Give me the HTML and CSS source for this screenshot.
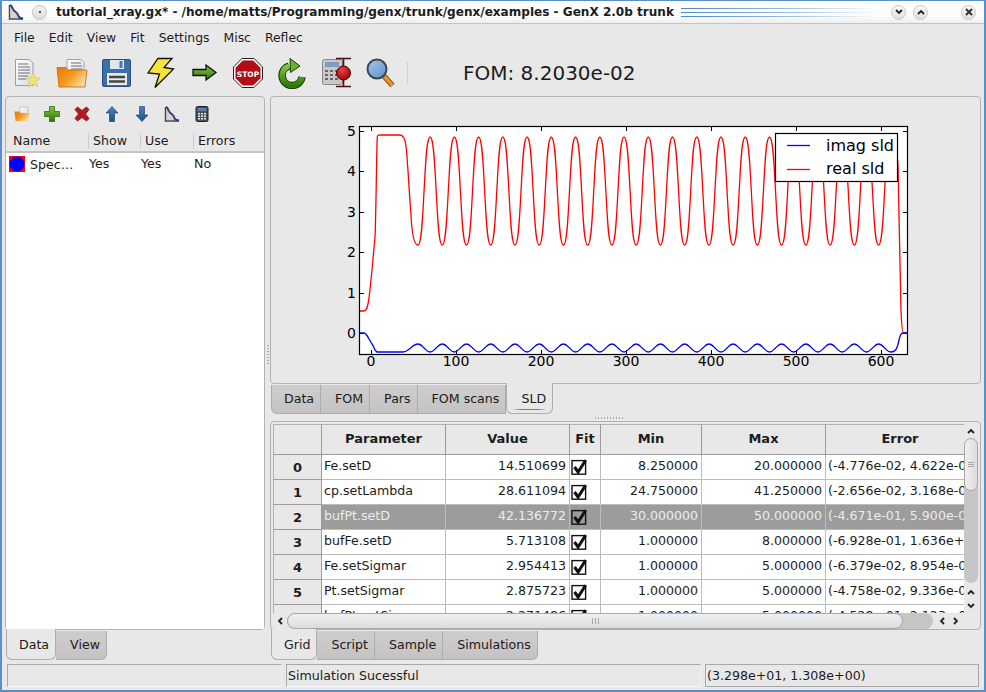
FILE: index.html
```html
<!DOCTYPE html>
<html lang="en">
<head>
    <meta charset="UTF-8">
    <title>GenX 2.0b trunk</title>
    <link rel="stylesheet" href="styles.css">
</head>
<body>
    <!-- Shared gradients and icons -->
    <svg class="svg-defs" xmlns="http://www.w3.org/2000/svg">
        <defs>
            <linearGradient id="g-orange" x1="0" y1="0" x2="1" y2="0.6">
                <stop offset="0" stop-color="#e87a08"/><stop offset="0.55" stop-color="#f59a20"/><stop offset="1" stop-color="#fbd9a0"/>
            </linearGradient>
            <linearGradient id="g-green" x1="0" y1="0" x2="0" y2="1">
                <stop offset="0" stop-color="#86c440"/><stop offset="1" stop-color="#2e7a08"/>
            </linearGradient>
            <linearGradient id="g-blue" x1="0" y1="0" x2="0" y2="1">
                <stop offset="0" stop-color="#4f82bb"/><stop offset="1" stop-color="#16508f"/>
            </linearGradient>
            <linearGradient id="g-lens" x1="0" y1="0" x2="1" y2="1">
                <stop offset="0" stop-color="#a8c8e8"/><stop offset="1" stop-color="#5a8fc8"/>
            </linearGradient>
            <radialGradient id="g-ball" cx="0.4" cy="0.3" r="0.8">
                <stop offset="0" stop-color="#f04040"/><stop offset="1" stop-color="#8a0000"/>
            </radialGradient>
            <linearGradient id="g-paper" x1="0" y1="0" x2="1" y2="1">
                <stop offset="0" stop-color="#ffffff"/><stop offset="1" stop-color="#d8dade"/>
            </linearGradient>
        </defs>
        <symbol id="i-reflect" viewBox="0 0 16 16">
            <path d="M2.5 3V14H13z" fill="#d4d4d4"/>
            <path d="M1.5 1v14H15" fill="none" stroke="#4a4a4a" stroke-width="1.5"/>
            <path d="M2 1c2 .5 2 3 3.500 5s3.500 2 4.500 5 2 3 5 3.500" fill="none" stroke="#1d3f90" stroke-width="2"/>
            <circle cx="5" cy="5" r="1.100" fill="#e02020"/><circle cx="9.500" cy="10" r="1.100" fill="#e02020"/>
        </symbol>
        <symbol id="i-chevron" viewBox="0 0 8 6">
            <path d="M1 5l3-3 3 3" fill="none" stroke="#222" stroke-width="1.8"/>
        </symbol>
        <symbol id="i-check" viewBox="0 0 16 16">
            <rect x="1" y="1.6" width="13.6" height="13.6" fill="none" stroke="#111" stroke-width="1.4"/>
            <path d="M3.500 8l3.600 5L14.600 1.200" fill="none" stroke="#111" stroke-width="3"/>
        </symbol>
        <symbol id="i-calc" viewBox="0 0 16 16">
            <rect x="2" y="0.5" width="12" height="15" rx="1.5" fill="#4a4f55" stroke="#222"/>
            <rect x="3.5" y="2" width="9" height="3" fill="#5b7fa8"/>
            <path d="M4 7h2v1.500H4zM7 7h2v1.500H7zM10 7h2v1.500h-2zM4 9.500h2V11H4zM7 9.500h2V11H7zM10 9.500h2V11h-2zM4 12h2v1.500H4zM7 12h2v1.500H7zM10 12h2v1.500h-2z" fill="#e8e8e8"/>
        </symbol>
    </svg>

    <div class="window">
        <!-- Title bar -->
        <div class="titlebar">
            <svg class="title-icon"><use href="#i-reflect"/></svg>
            <span class="title-pin"><i></i></span>
            <span class="title-text">tutorial_xray.gx* - /home/matts/Programming/genx/trunk/genx/examples - GenX 2.0b trunk</span>
            <div class="title-lines"><i></i><i></i><i></i></div>
            <span class="win-btn"><svg class="flip"><use href="#i-chevron"/></svg></span>
            <span class="win-btn"><svg><use href="#i-chevron"/></svg></span>
            <span class="win-btn win-close">
                <svg viewBox="0 0 10 10"><path d="M2 2l6 6M8 2l-6 6" stroke="#333" stroke-width="2"/></svg>
            </span>
        </div>

        <!-- Menu -->
        <div class="menubar">
            <span>File</span><span>Edit</span><span>View</span><span>Fit</span><span>Settings</span><span>Misc</span><span>Reflec</span>
        </div>

        <!-- Main toolbar -->
        <div class="toolbar">
            <span class="tool">
                <svg viewBox="0 0 32 32">
                    <path d="M3.5 2.500h14l3.500 3.500V28.500H3.500z" fill="url(#g-paper)" stroke="#9a9ea4"/>
                    <path d="M6 7h10M6 10h12M6 13h12M6 16h12M6 19h10M6 22h8" stroke="#6a7078" stroke-width="1.2"/>
                    <path d="M21 15.500l2.200 5 5.300.6-4 3.600 1.200 5.300-4.700-2.800-4.700 2.800 1.200-5.300-4-3.600 5.300-.6z" fill="#f4e070" stroke="#c8c8a0" stroke-width="0.8"/>
                </svg>
            </span>
            <span class="tool">
                <svg viewBox="0 0 32 32">
                    <path d="M11 2.500h14l3 3V22H11z" fill="url(#g-paper)" stroke="#a0a4aa"/>
                    <path d="M15 6h10M15 9h11M15 12h11" stroke="#6a7078" stroke-width="1.2"/>
                    <path d="M1 10.500h9l2 2.500h19L29 30H3z" fill="url(#g-orange)" stroke="#c06a08" stroke-width="0.8"/>
                </svg>
            </span>
            <span class="tool">
                <svg viewBox="0 0 32 32">
                    <rect x="2.5" y="2.5" width="28" height="27" rx="1.5" fill="#3c6fa8" stroke="#274f80"/>
                    <rect x="10" y="3" width="14" height="9" fill="#dfe6ee"/>
                    <rect x="19.5" y="4" width="3" height="7" fill="#4a76a8"/>
                    <rect x="7" y="16" width="20" height="12" fill="#e8e8e8"/>
                    <path d="M9 20h16M9 24.500h16" stroke="#444" stroke-width="2.6"/>
                </svg>
            </span>
            <span class="tool">
                <svg viewBox="0 0 32 32">
                    <path d="M14 1.500h14l-8 9 9.500 1.500L11 30.500l4.500-13.500-11.500-1z" fill="#f6e53c" stroke="#111" stroke-width="1.3"/>
                </svg>
            </span>
            <span class="tool">
                <svg viewBox="0 0 32 32">
                    <path d="M5 12.500h13V8l10 7.500L18 23v-4.500H5z" fill="url(#g-green)" stroke="#111" stroke-width="1.3"/>
                </svg>
            </span>
            <span class="tool">
                <svg viewBox="0 0 32 32">
                    <path d="M10 1.500h12L30.500 10v12L22 30.500H10L1.500 22V10z" fill="#fff" stroke="#222"/>
                    <path d="M10.800 3.500h10.400l7.300 7.300v10.400l-7.300 7.300H10.800l-7.300-7.300V10.800z" fill="#b40d18"/>
                    <text class="stop-text" x="16" y="19.5" text-anchor="middle">STOP</text>
                </svg>
            </span>
            <span class="tool">
                <svg viewBox="0 0 32 32">
                    <path d="M26 20A10 10 0 1 1 13 9" fill="none" stroke="#143c00" stroke-width="7.5"/>
                    <path d="M26 20A10 10 0 1 1 13 9" fill="none" stroke="url(#g-green)" stroke-width="5.5"/>
                    <path d="M14 1.500l10 7.500-9.500 6.500z" fill="#6cb030" stroke="#143c00"/>
                </svg>
            </span>
            <span class="tool">
                <svg viewBox="0 0 32 32">
                    <rect x="2.5" y="2.5" width="20" height="25" rx="2" fill="#c8c8c8" stroke="#888"/>
                    <rect x="5" y="5" width="14" height="5" fill="#7e9cc4"/>
                    <path d="M5 13h3v2H5zM10 13h3v2h-3zM15 13h3v2h-3zM5 17h3v2H5zM10 17h3v2h-3zM15 17h3v2h-3zM5 21h3v2H5zM10 21h3v2h-3zM15 21h3v2h-3z" fill="#666"/>
                    <path d="M16 1.500h15M23.500 1.500v28M16 29.500h15" stroke="#4a1010" stroke-width="1.6" fill="none"/>
                    <circle cx="23.5" cy="16" r="7" fill="url(#g-ball)" stroke="#500"/>
                </svg>
            </span>
            <span class="tool">
                <svg viewBox="0 0 32 32">
                    <path d="M20 19l8.500 9.500" stroke="#7a4a10" stroke-width="5.5"/>
                    <path d="M20.500 19.500l8 9" stroke="#f09030" stroke-width="3.5"/>
                    <circle cx="13" cy="12" r="9.5" fill="url(#g-lens)" stroke="#3c4650" stroke-width="2"/>
                </svg>
            </span>
            <span class="tool-sep"></span>
            <span class="fom">FOM: 8.2030e-02</span>
        </div>

        <div class="main">
            <!-- Left: data list -->
            <div class="col-left">
                <div class="panel list-panel">
                    <div class="mini-toolbar">
                        <span class="mini">
                            <svg viewBox="0 0 16 16">
                                <path d="M6 1h8v9H6z" fill="url(#g-paper)" stroke="#aaa" stroke-width="0.6"/>
                                <path d="M.5 5.500h5l1 1.500h9L14 15H1.500z" fill="url(#g-orange)"/>
                            </svg>
                        </span>
                        <span class="mini">
                            <svg viewBox="0 0 16 16">
                                <path d="M5.500.5h5v5h5v5h-5v5h-5v-5h-5v-5h5z" fill="url(#g-green)" stroke="#2c6a10" stroke-width="0.8"/>
                            </svg>
                        </span>
                        <span class="mini">
                            <svg viewBox="0 0 16 16">
                                <path d="M3.500 1L8 4.500 12.500 1 15 3.500 11.500 8l3.500 4.500-2.500 2.500L8 11.500 3.500 15 1 12.500 4.500 8 1 3.500z" fill="#b41a20" stroke="#7a1015" stroke-width="0.8"/>
                            </svg>
                        </span>
                        <span class="mini">
                            <svg viewBox="0 0 16 16">
                                <path d="M8 .5L14 7h-3.500v8.500h-5V7H2z" fill="url(#g-blue)" stroke="#123a6a" stroke-width="0.6"/>
                            </svg>
                        </span>
                        <span class="mini">
                            <svg viewBox="0 0 16 16">
                                <path d="M8 15.500L2 9h3.500V.5h5V9H14z" fill="url(#g-blue)" stroke="#123a6a" stroke-width="0.6"/>
                            </svg>
                        </span>
                        <span class="mini"><svg><use href="#i-reflect"/></svg></span>
                        <span class="mini"><svg><use href="#i-calc"/></svg></span>
                    </div>
                    <div class="list-head">
                        <span class="lc-name">Name</span><span class="lc-show">Show</span><span class="lc-use">Use</span><span class="lc-err">Errors</span>
                    </div>
                    <div class="list-body">
                        <div class="list-row">
                            <span class="lc-name">
                                <svg class="swatch" viewBox="0 0 16 16"><rect width="16" height="16" fill="#f00"/><circle cx="8" cy="8" r="7.5" fill="#00f"/></svg>Spec…
                            </span>
                            <span class="lc-show">Yes</span><span class="lc-use">Yes</span><span class="lc-err">No</span>
                        </div>
                    </div>
                </div>
                <div class="tabs tabs-bottom">
                    <span class="tab active">Data</span><span class="tab">View</span>
                </div>
            </div>

            <div class="sash-v"><i></i></div>

            <!-- Right: plot and grid -->
            <div class="col-right">
                <div class="panel plot-panel">
                    <svg class="plot" viewBox="271 97 709 286" xmlns="http://www.w3.org/2000/svg">
                        <rect x="359.5" y="126.5" width="548" height="228" fill="#fff"/>
                        <g class="ticks">
                            <path d="M371.500 354v-4M456.500 354v-4M541.500 354v-4M626.500 354v-4M711.500 354v-4M796.500 354v-4M881.500 354v-4"/>
                            <path d="M371.500 127v4M456.500 127v4M541.500 127v4M626.500 127v4M711.500 127v4M796.500 127v4M881.500 127v4"/>
                            <path d="M360 333.500h4M360 293.500h4M360 252.500h4M360 212.500h4M360 171.500h4M360 131.500h4"/>
                            <path d="M907 333.500h-4M907 293.500h-4M907 252.500h-4M907 212.500h-4M907 171.500h-4M907 131.500h-4"/>
                        </g>
                        <path class="line-red" d="M359.500 311H364C367 311 368 305 369 298C370 290 371 280 372 270L375 237C376 220 376.500 150 377.300 137C377.600 135 378 135 380 135H400C403 135 405 138 406 146C407.500 158 409 190 411 215C412 236 414 245 418 245
                            c3.6,0 4.6,-28 6.06,-54 c1.46,-26 2.46,-54 6.06,-54 c3.6,0 4.6,28 6.06,54 c1.46,26 2.46,54 6.06,54
                            c3.6,0 4.6,-28 6.06,-54 c1.46,-26 2.46,-54 6.06,-54 c3.6,0 4.6,28 6.06,54 c1.46,26 2.46,54 6.06,54
                            c3.6,0 4.6,-28 6.06,-54 c1.46,-26 2.46,-54 6.06,-54 c3.6,0 4.6,28 6.06,54 c1.46,26 2.46,54 6.06,54
                            c3.6,0 4.6,-28 6.06,-54 c1.46,-26 2.46,-54 6.06,-54 c3.6,0 4.6,28 6.06,54 c1.46,26 2.46,54 6.06,54
                            c3.6,0 4.6,-28 6.06,-54 c1.46,-26 2.46,-54 6.06,-54 c3.6,0 4.6,28 6.06,54 c1.46,26 2.46,54 6.06,54
                            c3.6,0 4.6,-28 6.06,-54 c1.46,-26 2.46,-54 6.06,-54 c3.6,0 4.6,28 6.06,54 c1.46,26 2.46,54 6.06,54
                            c3.6,0 4.6,-28 6.06,-54 c1.46,-26 2.46,-54 6.06,-54 c3.6,0 4.6,28 6.06,54 c1.46,26 2.46,54 6.06,54
                            c3.6,0 4.6,-28 6.06,-54 c1.46,-26 2.46,-54 6.06,-54 c3.6,0 4.6,28 6.06,54 c1.46,26 2.46,54 6.06,54
                            c3.6,0 4.6,-28 6.06,-54 c1.46,-26 2.46,-54 6.06,-54 c3.6,0 4.6,28 6.06,54 c1.46,26 2.46,54 6.06,54
                            c3.6,0 4.6,-28 6.06,-54 c1.46,-26 2.46,-54 6.06,-54 c3.6,0 4.6,28 6.06,54 c1.46,26 2.46,54 6.06,54
                            c3.6,0 4.6,-28 6.06,-54 c1.46,-26 2.46,-54 6.06,-54 c3.6,0 4.6,28 6.06,54 c1.46,26 2.46,54 6.06,54
                            c3.6,0 4.6,-28 6.06,-54 c1.46,-26 2.46,-54 6.06,-54 c3.6,0 4.6,28 6.06,54 c1.46,26 2.46,54 6.06,54
                            c3.6,0 4.6,-28 6.06,-54 c1.46,-26 2.46,-54 6.06,-54 c3.6,0 4.6,28 6.06,54 c1.46,26 2.46,54 6.06,54
                            c3.6,0 4.6,-28 6.06,-54 c1.46,-26 2.46,-54 6.06,-54 c3.6,0 4.6,28 6.06,54 c1.46,26 2.46,54 6.06,54
                            c3.6,0 4.6,-28 6.06,-54 c1.46,-26 2.46,-54 6.06,-54 c3.6,0 4.6,28 6.06,54 c1.46,26 2.46,54 6.06,54
                            c3.6,0 4.6,-28 6.06,-54 c1.46,-26 2.46,-54 6.06,-54 c3.6,0 4.6,28 6.06,54 c1.46,26 2.46,54 6.06,54
                            c3.6,0 4.6,-28 6.06,-54 c1.46,-26 2.46,-54 6.06,-54 c3.6,0 4.6,28 6.06,54 c1.46,26 2.46,54 6.06,54
                            c3.6,0 4.6,-28 6.06,-54 c1.46,-26 2.46,-54 6.06,-54 c3.6,0 4.6,28 6.06,54 c1.46,26 2.46,54 6.06,54
                            c3.6,0 4.6,-28 6.06,-54 c1.46,-26 2.46,-54 6.06,-54 c3.6,0 4.6,28 6.06,54 c1.46,26 2.46,54 6.06,54
                            c3.6,0 4.6,-28 6.06,-54 c1.46,-26 2.46,-54 6.06,-54
                            C893 137 896 140 898 165L899.500 240L901 310Q902 333 903.500 333H907"/>
                        <path class="line-blue" d="M359.500 333H364C366 333 367 335 369 339L372 344C373.500 346 374 348 375 350L377 352H403C405 352 406 351.500 408 350C411 348 414 344 418 344
                            c2.6,0 4.4,2.4 6.06,4 c1.66,1.6 3.46,4 6.06,4 c2.6,0 4.4,-2.4 6.06,-4 c1.66,-1.6 3.46,-4 6.06,-4
                            c2.6,0 4.4,2.4 6.06,4 c1.66,1.6 3.46,4 6.06,4 c2.6,0 4.4,-2.4 6.06,-4 c1.66,-1.6 3.46,-4 6.06,-4
                            c2.6,0 4.4,2.4 6.06,4 c1.66,1.6 3.46,4 6.06,4 c2.6,0 4.4,-2.4 6.06,-4 c1.66,-1.6 3.46,-4 6.06,-4
                            c2.6,0 4.4,2.4 6.06,4 c1.66,1.6 3.46,4 6.06,4 c2.6,0 4.4,-2.4 6.06,-4 c1.66,-1.6 3.46,-4 6.06,-4
                            c2.6,0 4.4,2.4 6.06,4 c1.66,1.6 3.46,4 6.06,4 c2.6,0 4.4,-2.4 6.06,-4 c1.66,-1.6 3.46,-4 6.06,-4
                            c2.6,0 4.4,2.4 6.06,4 c1.66,1.6 3.46,4 6.06,4 c2.6,0 4.4,-2.4 6.06,-4 c1.66,-1.6 3.46,-4 6.06,-4
                            c2.6,0 4.4,2.4 6.06,4 c1.66,1.6 3.46,4 6.06,4 c2.6,0 4.4,-2.4 6.06,-4 c1.66,-1.6 3.46,-4 6.06,-4
                            c2.6,0 4.4,2.4 6.06,4 c1.66,1.6 3.46,4 6.06,4 c2.6,0 4.4,-2.4 6.06,-4 c1.66,-1.6 3.46,-4 6.06,-4
                            c2.6,0 4.4,2.4 6.06,4 c1.66,1.6 3.46,4 6.06,4 c2.6,0 4.4,-2.4 6.06,-4 c1.66,-1.6 3.46,-4 6.06,-4
                            c2.6,0 4.4,2.4 6.06,4 c1.66,1.6 3.46,4 6.06,4 c2.6,0 4.4,-2.4 6.06,-4 c1.66,-1.6 3.46,-4 6.06,-4
                            c2.6,0 4.4,2.4 6.06,4 c1.66,1.6 3.46,4 6.06,4 c2.6,0 4.4,-2.4 6.06,-4 c1.66,-1.6 3.46,-4 6.06,-4
                            c2.6,0 4.4,2.4 6.06,4 c1.66,1.6 3.46,4 6.06,4 c2.6,0 4.4,-2.4 6.06,-4 c1.66,-1.6 3.46,-4 6.06,-4
                            c2.6,0 4.4,2.4 6.06,4 c1.66,1.6 3.46,4 6.06,4 c2.6,0 4.4,-2.4 6.06,-4 c1.66,-1.6 3.46,-4 6.06,-4
                            c2.6,0 4.4,2.4 6.06,4 c1.66,1.6 3.46,4 6.06,4 c2.6,0 4.4,-2.4 6.06,-4 c1.66,-1.6 3.46,-4 6.06,-4
                            c2.6,0 4.4,2.4 6.06,4 c1.66,1.6 3.46,4 6.06,4 c2.6,0 4.4,-2.4 6.06,-4 c1.66,-1.6 3.46,-4 6.06,-4
                            c2.6,0 4.4,2.4 6.06,4 c1.66,1.6 3.46,4 6.06,4 c2.6,0 4.4,-2.4 6.06,-4 c1.66,-1.6 3.46,-4 6.06,-4
                            c2.6,0 4.4,2.4 6.06,4 c1.66,1.6 3.46,4 6.06,4 c2.6,0 4.4,-2.4 6.06,-4 c1.66,-1.6 3.46,-4 6.06,-4
                            c2.6,0 4.4,2.4 6.06,4 c1.66,1.6 3.46,4 6.06,4 c2.6,0 4.4,-2.4 6.06,-4 c1.66,-1.6 3.46,-4 6.06,-4
                            c2.6,0 4.4,2.4 6.06,4 c1.66,1.6 3.46,4 6.06,4 c2.6,0 4.4,-2.4 6.06,-4 c1.66,-1.6 3.46,-4 6.06,-4
                            c2.6,0 4.4,2.4 6.06,4 c1.66,1.6 3.46,4 6.06,4
                            C895 352 897 350 899 340C900 335 901 333 903 333H907"/>
                        <rect class="frame" x="359.5" y="126.5" width="548" height="228"/>
                        <g class="tick-labels x-labels">
                            <text x="371" y="366">0</text><text x="456" y="366">100</text><text x="541" y="366">200</text><text x="626" y="366">300</text><text x="711" y="366">400</text><text x="796" y="366">500</text><text x="881" y="366">600</text>
                        </g>
                        <g class="tick-labels y-labels">
                            <text x="356" y="338">0</text><text x="356" y="298">1</text><text x="356" y="257">2</text><text x="356" y="217">3</text><text x="356" y="176">4</text><text x="356" y="136">5</text>
                        </g>
                        <rect class="legend" x="775.5" y="133.5" width="122" height="48"/>
                        <path class="line-blue" d="M787 145.500h23"/>
                        <path class="line-red" d="M787 169.500h23"/>
                        <text class="legend-text" x="826" y="151">imag sld</text>
                        <text class="legend-text" x="826" y="174">real sld</text>
                    </svg>
                </div>
                <div class="tabs tabs-top">
                    <span class="tab">Data</span><span class="tab">FOM</span><span class="tab">Pars</span><span class="tab">FOM scans</span><span class="tab active">SLD</span>
                </div>
                <div class="sash-h"><i></i></div>

                <div class="panel grid-panel">
                    <div class="grid-top">
                        <div class="grid-clip">
                            <table class="grid">
                                <colgroup>
                                    <col class="c-label"><col class="c-wide"><col class="c-wide"><col class="c-fit"><col class="c-min"><col class="c-wide"><col class="c-err">
                                </colgroup>
                                <thead>
                                    <tr><th></th><th>Parameter</th><th>Value</th><th>Fit</th><th>Min</th><th>Max</th><th>Error</th></tr>
                                </thead>
                                <tbody>
                                    <tr><th>0</th><td>Fe.setD</td><td class="num">14.510699</td><td class="chk"><svg><use href="#i-check"/></svg></td><td class="num">8.250000</td><td class="num">20.000000</td><td>(-4.776e-02, 4.622e-02)</td></tr>
                                    <tr><th>1</th><td>cp.setLambda</td><td class="num">28.611094</td><td class="chk"><svg><use href="#i-check"/></svg></td><td class="num">24.750000</td><td class="num">41.250000</td><td>(-2.656e-02, 3.168e-02)</td></tr>
                                    <tr class="selected"><th>2</th><td>bufPt.setD</td><td class="num">42.136772</td><td class="chk"><svg><use href="#i-check"/></svg></td><td class="num">30.000000</td><td class="num">50.000000</td><td>(-4.671e-01, 5.900e-01)</td></tr>
                                    <tr><th>3</th><td>bufFe.setD</td><td class="num">5.713108</td><td class="chk"><svg><use href="#i-check"/></svg></td><td class="num">1.000000</td><td class="num">8.000000</td><td>(-6.928e-01, 1.636e+00)</td></tr>
                                    <tr><th>4</th><td>Fe.setSigmar</td><td class="num">2.954413</td><td class="chk"><svg><use href="#i-check"/></svg></td><td class="num">1.000000</td><td class="num">5.000000</td><td>(-6.379e-02, 8.954e-02)</td></tr>
                                    <tr><th>5</th><td>Pt.setSigmar</td><td class="num">2.875723</td><td class="chk"><svg><use href="#i-check"/></svg></td><td class="num">1.000000</td><td class="num">5.000000</td><td>(-4.758e-02, 9.336e-02)</td></tr>
                                    <tr><th>6</th><td>bufPt.setSigmar</td><td class="num">2.271486</td><td class="chk"><svg><use href="#i-check"/></svg></td><td class="num">1.000000</td><td class="num">5.000000</td><td>(-4.528e-01, 2.123e-01)</td></tr>
                                </tbody>
                            </table>
                        </div>
                        <div class="vscroll">
                            <span class="arrow"><svg><use href="#i-chevron"/></svg></span>
                            <div class="v-trough"><div class="v-thumb"></div></div>
                            <span class="arrow arrow-gap"><svg><use href="#i-chevron"/></svg></span>
                            <span class="arrow"><svg class="flip"><use href="#i-chevron"/></svg></span>
                        </div>
                    </div>
                    <div class="hscroll">
                        <span class="arrow"><svg class="turn-left"><use href="#i-chevron"/></svg></span>
                        <div class="h-trough"><div class="h-thumb"></div></div>
                        <span class="arrow"><svg class="turn-left"><use href="#i-chevron"/></svg></span>
                        <span class="arrow"><svg class="turn-right"><use href="#i-chevron"/></svg></span>
                    </div>
                </div>
                <div class="tabs tabs-bottom">
                    <span class="tab active">Grid</span><span class="tab">Script</span><span class="tab">Sample</span><span class="tab">Simulations</span>
                </div>
            </div>
        </div>

        <!-- Status bar -->
        <div class="statusbar">
            <span class="status st-1"></span>
            <span class="status st-2">Simulation Sucessful</span>
            <span class="status st-3">(3.298e+01, 1.308e+00)</span>
        </div>
    </div>
</body>
</html>
```

FILE: styles.css
```css
:root {
    --bg: #e8e8e8;
    --line: #b2b2b2;
    --cell-line: #bcbcbc;
    --head-line: #9c9c9c;
    --text: #1c1c1c;
    --blue: #5b8fc9;
}

* {
    box-sizing: border-box;
}

body {
    margin: 0;
    background: var(--bg);
    font-family: "DejaVu Sans", sans-serif;
    font-size: 12.6px;
    color: var(--text);
}

.svg-defs {
    display: block;
    width: 0;
    height: 0;
}

.window {
    display: flex;
    flex-direction: column;
    width: 986px;
    height: 692px;
    border: 2px solid var(--blue);
    border-top-width: 1px;
    background: var(--bg);
    overflow: hidden;
}

/* Title bar */
.titlebar {
    display: flex;
    align-items: center;
    flex: 0 0 23px;
    padding-left: 6px;
    background: linear-gradient(#ffffff, #fbfbfb 70%, #eeeeee);
    border-bottom: 1px solid #c4c4c4;
}

.titlebar > * {
    flex-shrink: 0;
}

.title-icon {
    width: 16px;
    height: 16px;
    margin-right: 8px;
}

.title-pin {
    display: flex;
    align-items: center;
    justify-content: center;
    width: 15px;
    height: 15px;
    margin-right: 9px;
    border: 1px solid #c4c4c4;
    border-radius: 50%;
    background: linear-gradient(#f4f4f4, #dcdcdc);
}

.title-pin i {
    width: 2px;
    height: 2px;
    background: #555;
}

.title-text {
    width: 625px;
    font-size: 12.05px;
    font-weight: bold;
    white-space: nowrap;
}

.title-lines {
    display: flex;
    flex-direction: column;
    gap: 3px;
    width: 200px;
    margin-right: 10px;
}

.title-lines i {
    display: block;
    height: 1px;
    background: linear-gradient(90deg, #4d88c6, #9dbfe0 55%, #ffffff);
}

.win-btn {
    display: flex;
    align-items: center;
    justify-content: center;
    width: 15px;
    height: 15px;
    margin-right: 7px;
    border: 1px solid #c8c8c8;
    border-radius: 50%;
    background: linear-gradient(#fafafa, #e0e0e0);
}

.win-btn svg {
    width: 8px;
    height: 6px;
}

.win-close {
    margin-left: 26px;
}

.win-close svg {
    width: 10px;
    height: 10px;
}

.flip {
    transform: rotate(180deg);
}

.turn-left {
    transform: rotate(-90deg);
}

.turn-right {
    transform: rotate(90deg);
}

/* Menu */
.menubar {
    display: flex;
    align-items: center;
    gap: 14px;
    flex: 0 0 26px;
    padding-left: 12px;
    font-size: 12.4px;
}

/* Toolbar */
.toolbar {
    display: flex;
    align-items: center;
    flex: 0 0 46px;
    padding-left: 4px;
}

.tool {
    display: flex;
    justify-content: center;
    width: 44px;
}

.tool svg {
    width: 32px;
    height: 32px;
}

.stop-text {
    font-family: "DejaVu Sans", sans-serif;
    font-size: 7.5px;
    font-weight: bold;
    fill: #fff;
}

.tool-sep {
    width: 1px;
    height: 22px;
    margin-left: 5px;
    background: #d0d0d0;
}

.fom {
    margin-left: 55px;
    font-size: 20px;
}

/* Main layout */
.main {
    display: flex;
    flex: 1;
    min-height: 0;
    padding: 0 3px;
}

.col-left {
    display: flex;
    flex-direction: column;
    width: 260px;
}

.col-right {
    display: flex;
    flex-direction: column;
    width: 711px;
}

.panel {
    border: 1px solid var(--line);
    border-radius: 4px;
}

.sash-v {
    display: flex;
    align-items: center;
    justify-content: center;
    width: 5px;
    padding-bottom: 50px;
}

.sash-v i {
    width: 2px;
    height: 20px;
    background: repeating-linear-gradient(#a8a8a8 0 1px, transparent 1px 3px);
}

.sash-h {
    display: flex;
    align-items: center;
    justify-content: center;
    flex: 0 0 7px;
    padding-right: 34px;
}

.sash-h i {
    width: 28px;
    height: 2px;
    background: repeating-linear-gradient(90deg, #a8a8a8 0 1px, transparent 1px 3px);
}

/* Data list */
.list-panel {
    display: flex;
    flex-direction: column;
    flex: 1;
    min-height: 0;
}

.mini-toolbar {
    display: flex;
    align-items: center;
    flex: 0 0 33px;
    padding-left: 1px;
}

.mini {
    display: flex;
    justify-content: center;
    width: 30px;
}

.mini svg {
    width: 16px;
    height: 16px;
}

.list-head {
    display: flex;
    align-items: center;
    flex: 0 0 23px;
    border-bottom: 2px solid #c4c4c4;
}

.list-head span + span {
    border-left: 1px solid #cccccc;
    line-height: 16px;
}

.lc-name {
    display: flex;
    align-items: center;
    width: 82px;
    padding-left: 7px;
}

.lc-show {
    width: 52px;
    padding-left: 4px;
}

.lc-use {
    width: 53px;
    padding-left: 4px;
}

.lc-err {
    padding-left: 4px;
}

.list-body {
    flex: 1;
    background: #fff;
}

.list-row {
    display: flex;
    align-items: center;
    height: 22px;
}

.list-row span {
    padding-bottom: 1px;
}

.list-row .lc-name {
    padding-left: 3px;
    padding-bottom: 0;
}

.list-row .lc-show,
.list-row .lc-use,
.list-row .lc-err {
    padding-left: 1px;
}

.swatch {
    flex-shrink: 0;
    width: 16px;
    height: 16px;
    margin-right: 5px;
}

/* Notebook tabs */
.tabs {
    display: flex;
    align-items: flex-start;
    padding-left: 1px;
}

.tabs-top {
    flex: 0 0 30px;
}

.tabs-bottom {
    flex: 0 0 34px;
}

.tab {
    height: 29px;
    margin-top: 1px;
    padding: 0 6px 0 14px;
    line-height: 27px;
    background: linear-gradient(#cfcdcd, #c4c2c2);
    border-right: 1px solid #adadad;
    border-bottom: 1px solid #adadad;
    white-space: nowrap;
}

.tab:first-child {
    padding-left: 12px;
    border-left: 1px solid #adadad;
    border-bottom-left-radius: 6px;
}

.tab:last-child {
    border-bottom-right-radius: 6px;
}

.tab.active {
    position: relative;
    height: 31px;
    margin-top: -1px;
    padding-top: 2px;
    background: var(--bg);
    border: 1px solid #adadad;
    border-top: none;
    border-radius: 0 0 6px 6px;
}

.tabs-top .tab.active::after {
    content: "";
    position: absolute;
    left: 5px;
    right: 5px;
    bottom: 3px;
    height: 1px;
    background: linear-gradient(90deg, transparent, #4d88c6 25%, #4d88c6 75%, transparent);
}

/* Plot */
.plot-panel {
    flex: 0 0 288px;
}

.plot {
    display: block;
    width: 709px;
    height: 286px;
}

.ticks path {
    fill: none;
    stroke: #000;
    stroke-width: 1;
}

.frame,
.legend {
    fill: none;
    stroke: #000;
    stroke-width: 1.2;
}

.legend {
    fill: #fff;
}

.line-red,
.line-blue {
    fill: none;
    stroke-width: 1.3;
}

.line-red {
    stroke: #f00;
}

.line-blue {
    stroke: #00f;
}

.tick-labels {
    font-family: "DejaVu Sans", sans-serif;
    font-size: 14px;
    fill: #000;
}

.x-labels {
    text-anchor: middle;
}

.y-labels {
    text-anchor: end;
}

.legend-text {
    font-family: "DejaVu Sans", sans-serif;
    font-size: 16px;
    fill: #000;
}

/* Parameter grid */
.grid-panel {
    display: flex;
    flex-direction: column;
    flex: 1;
    min-height: 0;
    padding: 2px 2px 0;
}

.grid-top {
    display: flex;
    height: 189px;
}

.grid-clip {
    width: 691px;
    overflow: hidden;
}

.grid {
    table-layout: fixed;
    width: 701px;
    border-collapse: separate;
    border-spacing: 0;
}

.c-label {
    width: 49px;
}

.c-wide {
    width: 124px;
}

.c-fit {
    width: 31px;
}

.c-min {
    width: 101px;
}

.c-err {
    width: 148px;
}

.grid th,
.grid td {
    height: 25px;
    padding: 0 3px 4px 2px;
    overflow: hidden;
    white-space: nowrap;
    border-right: 1px solid var(--cell-line);
    border-bottom: 1px solid var(--cell-line);
    background: #fff;
}

.grid th {
    font-size: 13px;
    background: var(--bg);
    border-color: var(--head-line);
    padding: 1px 3px 0;
}

.grid thead th {
    height: 31px;
    padding: 0 3px 3px;
    border-top: 1px solid var(--line);
}

.grid thead th:first-child,
.grid tbody th {
    border-left: 1px solid var(--line);
}

.grid .num {
    text-align: right;
}

.grid .selected td {
    background: #9c9c9c;
    color: #ececec;
}

.grid td.chk {
    padding: 0;
}

.chk svg {
    display: block;
    width: 16px;
    height: 16px;
    margin-left: 1px;
}

.grid tbody td:last-child,
.grid thead th:last-child {
    border-right: none;
}

/* Scrollbars */
.arrow {
    display: flex;
    align-items: center;
    justify-content: center;
    flex: 0 0 14px;
    height: 14px;
}

.arrow svg {
    width: 8px;
    height: 6px;
}

.vscroll {
    display: flex;
    flex-direction: column;
    width: 14px;
}

.v-trough {
    flex: 1;
    background: #c6c6c6;
    border-radius: 7px;
}

.v-thumb {
    display: flex;
    align-items: center;
    justify-content: center;
    height: 53px;
    background: linear-gradient(90deg, #f0f0f0, #dcdcdc);
    border: 1px solid #a8a8a8;
    border-radius: 7px;
}

.v-thumb::before {
    content: "";
    width: 6px;
    height: 5px;
    background: repeating-linear-gradient(#a8a8a8 0 1px, transparent 1px 2px);
}

.arrow-gap {
    margin-top: 2px;
}

.hscroll {
    display: flex;
    align-items: center;
    height: 16px;
}

.h-trough {
    display: flex;
    width: 646px;
    height: 16px;
    margin-right: 2px;
    background: #c6c6c6;
    border-radius: 8px;
}

.h-thumb {
    display: flex;
    align-items: center;
    justify-content: center;
    width: 616px;
    background: linear-gradient(#f0f0f0, #dcdcdc);
    border: 1px solid #a8a8a8;
    border-radius: 8px;
}

.h-thumb::before {
    content: "";
    width: 7px;
    height: 6px;
    background: repeating-linear-gradient(90deg, #a8a8a8 0 1px, transparent 1px 3px);
}

/* Status bar */
.statusbar {
    display: flex;
    flex: 0 0 26px;
    gap: 4px;
    padding: 0 5px 3px 5px;
}

.status {
    padding: 3px 1px 0;
    border: 1px solid #a8a8a8;
    border-right-color: #f0f0f0;
    border-bottom-color: #f8f8f8;
    white-space: nowrap;
}

.st-1 {
    width: 275px;
}

.st-2 {
    width: 415px;
}

.st-3 {
    flex: 1;
    border-right-color: #a8a8a8;
    border-bottom-color: #a8a8a8;
}
```
